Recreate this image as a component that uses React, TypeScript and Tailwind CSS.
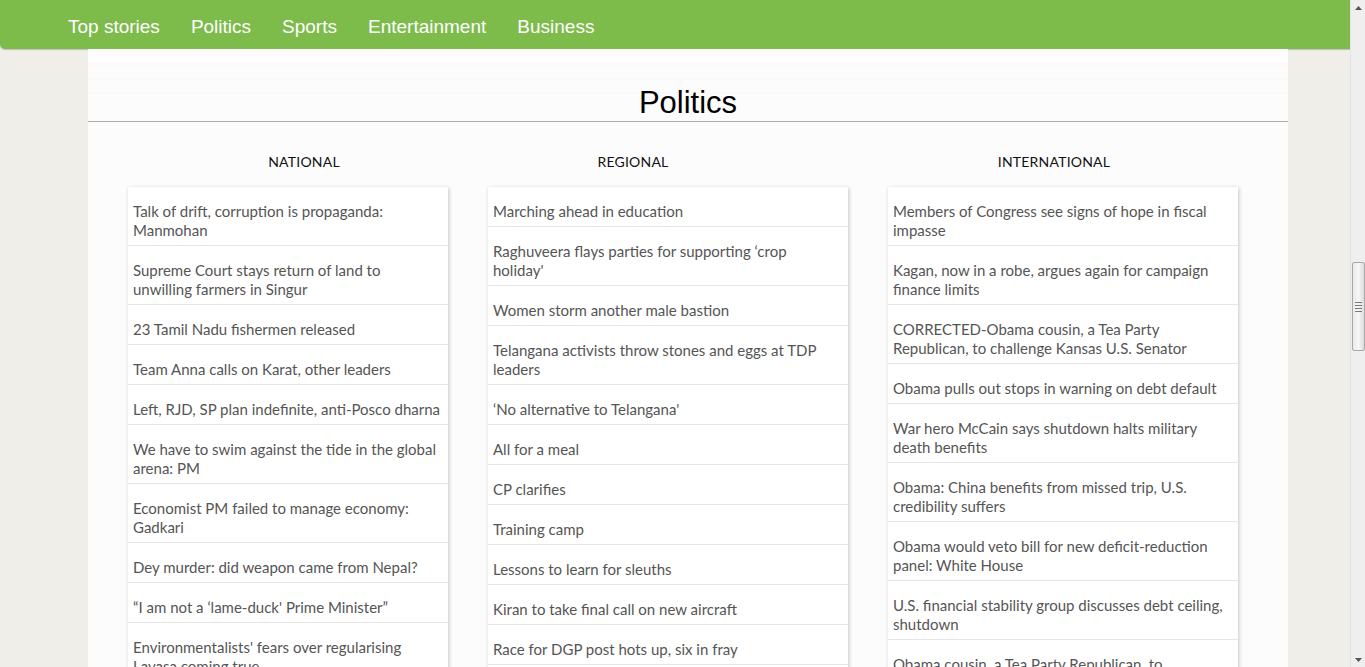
import React from "react";

const national = [
  "Talk of drift, corruption is propaganda: Manmohan",
  "Supreme Court stays return of land to unwilling farmers in Singur",
  "23 Tamil Nadu fishermen released",
  "Team Anna calls on Karat, other leaders",
  "Left, RJD, SP plan indefinite, anti-Posco dharna",
  "We have to swim against the tide in the global arena: PM",
  "Economist PM failed to manage economy: Gadkari",
  "Dey murder: did weapon came from Nepal?",
  "“I am not a ‘lame-duck' Prime Minister”",
  "Environmentalists' fears over regularising Lavasa coming true",
  "Opposition seeks probe into coal block allocation",
  "Cabinet clears food security bill",
];

const regional = [
  "Marching ahead in education",
  "Raghuveera flays parties for supporting ‘crop holiday'",
  "Women storm another male bastion",
  "Telangana activists throw stones and eggs at TDP leaders",
  "‘No alternative to Telangana'",
  "All for a meal",
  "CP clarifies",
  "Training camp",
  "Lessons to learn for sleuths",
  "Kiran to take final call on new aircraft",
  "Race for DGP post hots up, six in fray",
  "Farmers stage dharna",
  "Rain lashes coastal districts",
];

const international = [
  "Members of Congress see signs of hope in fiscal impasse",
  "Kagan, now in a robe, argues again for campaign finance limits",
  "CORRECTED-Obama cousin, a Tea Party Republican, to challenge Kansas U.S. Senator",
  "Obama pulls out stops in warning on debt default",
  "War hero McCain says shutdown halts military death benefits",
  "Obama: China benefits from missed trip, U.S. credibility suffers",
  "Obama would veto bill for new deficit-reduction panel: White House",
  "U.S. financial stability group discusses debt ceiling, shutdown",
  "Obama cousin, a Tea Party Republican, to challenge Kansas U.S. Senator",
  "Senate leaders near deal on debt limit",
];

function Card({
  items,
  className,
  itemClass,
}: {
  items: string[];
  className: string;
  itemClass: string;
}) {
  return (
    <ul className={"bg-white shadow-[1px_1px_4px_rgba(0,0,0,0.22)] " + className}>
      {items.map((t, i) => (
        <li
          key={i}
          className={
            "pl-[5px] pt-[15px] pb-[5px] border-b border-[#e6e6e6] text-[15px] leading-[19px] text-[#555] " +
            itemClass
          }
        >
          {t}
        </li>
      ))}
    </ul>
  );
}

const navItems = ["Top stories", "Politics", "Sports", "Entertainment", "Business"];

export default function App() {
  return (
    <div className="min-h-screen bg-[#efeee9] font-['Lato',sans-serif]">
      <nav className="w-[1350px] h-[49px] bg-[#7dbb4b] rounded-bl-[5px] shadow-[0_1px_1px_rgba(0,0,0,0.2)] flex items-center gap-[31px] pl-[68px] font-['Liberation_Sans',Arial,sans-serif] text-[19px] text-white">
        {navItems.map((n) => (
          <span key={n} className="leading-[22px] pt-[5px]">
            {n}
          </span>
        ))}
      </nav>
      <main className="ml-[88px] w-[1200px] bg-[#fcfcfc] pb-10">
        <div className="h-[73px] border-b border-[#acacac] bg-[linear-gradient(to_bottom,#fdfdfd_0px,#fdfdfd_14px,#f7f7f7_15px,#fcfcfc_16px,#fcfcfc_29px,#f7f7f7_30px,#fcfcfc_31px,#fcfcfc_43px,#f8f8f8_44px,#fcfcfc_45px)] pt-[35px] text-center font-['Liberation_Sans',Arial,sans-serif] text-[31px] leading-[38px] text-black font-light">
          Politics
        </div>
        <div className="flex pl-[40px] pt-[30px]">
          <div className="w-[360px]">
            <div className="w-[352px] text-center text-[14px] leading-[20px] text-[#111] tracking-[0.2px]">
              NATIONAL
            </div>
            <Card items={national} className="mt-[15px] w-[320px]" itemClass="pr-[7px]" />
          </div>
          <div className="w-[400px]">
            <div className="w-[290px] text-center text-[14px] leading-[20px] text-[#111] tracking-[0.2px]">
              REGIONAL
            </div>
            <Card items={regional} className="mt-[15px] w-[360px]" itemClass="pr-[12px]" />
          </div>
          <div className="w-[350px]">
            <div className="w-[332px] text-center text-[14px] leading-[20px] text-[#111] tracking-[0.2px]">
              INTERNATIONAL
            </div>
            <Card items={international} className="mt-[15px] w-[350px]" itemClass="pr-[12px]" />
          </div>
        </div>
      </main>
      <div className="fixed top-0 right-0 w-[15px] h-screen bg-[#efefef] border-l border-[#e2e2e2] flex flex-col items-center">
        <div className="h-[15px] flex items-center justify-center">
          <svg width="7" height="4" viewBox="0 0 7 4">
            <path d="M0 4 L3.5 0 L7 4 Z" fill="#555" />
          </svg>
        </div>
        <div className="mt-[247px] w-[13px] h-[89px] rounded-[2px] border border-[#a9a9a9] bg-[linear-gradient(to_right,#e9e9e9,#f7f7f7,#dcdcdc)] flex flex-col items-center justify-center gap-[2px]">
          <div className="w-[7px] h-px bg-[#777]" />
          <div className="w-[7px] h-px bg-[#777]" />
          <div className="w-[7px] h-px bg-[#777]" />
          <div className="w-[7px] h-px bg-[#777]" />
        </div>
        <div className="mt-auto h-[15px] flex items-center justify-center">
          <svg width="7" height="4" viewBox="0 0 7 4">
            <path d="M0 0 L3.5 4 L7 0 Z" fill="#555" />
          </svg>
        </div>
      </div>
    </div>
  );
}
